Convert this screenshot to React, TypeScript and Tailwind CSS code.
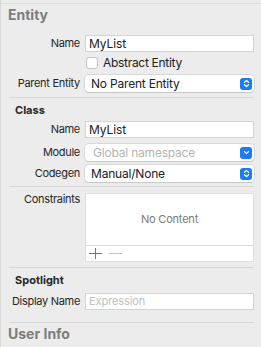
import React from "react";

const font = { fontFamily: "Inter, 'Noto Sans', sans-serif" };

const Stepper: React.FC = () => (
  <span className="w-[12px] h-[12px] rounded-[3px] bg-[#1a7cf5] flex items-center justify-center">
    <svg width="7" height="9" viewBox="0 0 7 9" fill="none" stroke="white" strokeWidth="1.3" strokeLinecap="round" strokeLinejoin="round">
      <path d="M1.5 3.2 L3.5 1.4 L5.5 3.2" />
      <path d="M1.5 5.8 L3.5 7.6 L5.5 5.8" />
    </svg>
  </span>
);

const Chevron: React.FC = () => (
  <span className="w-[12px] h-[12px] rounded-[3px] bg-[#1a7cf5] flex items-center justify-center">
    <svg width="7" height="7" viewBox="0 0 7 7" fill="none" stroke="white" strokeWidth="1.3" strokeLinecap="round" strokeLinejoin="round">
      <path d="M1.5 2.6 L3.5 4.6 L5.5 2.6" />
    </svg>
  </span>
);

const Label: React.FC<{ children: React.ReactNode }> = ({ children }) => (
  <span className="w-[80px] text-right text-[11px] tracking-[-0.3px] text-[#262626] shrink-0">{children}</span>
);

const Field: React.FC<{ value?: string; placeholder?: string }> = ({ value, placeholder }) => (
  <div className="flex-1 h-[17px] bg-white border border-[#d3d3d3] flex items-center pl-[3px] text-[12px] leading-none tracking-[-0.1px]">
    {value ? <span className="text-[#222]">{value}</span> : <span className="text-[#c0c0c0] text-[11px]">{placeholder}</span>}
  </div>
);

const Popup: React.FC<{ value: string; dim?: boolean; chevron?: boolean }> = ({ value, dim, chevron }) => (
  <div className="flex-1 h-[17px] bg-white rounded-[4px] shadow-[0_0_0_0.5px_#c8c8c8,0_0.5px_1px_rgba(0,0,0,0.15)] flex items-center justify-between pr-[2px]">
    <span className={dim ? "pl-[8px] text-[12px] tracking-[-0.2px] text-[#b4b4b4]" : "pl-[6px] text-[12px] tracking-[-0.2px] text-[#222]"}>{value}</span>
    {chevron ? <Chevron /> : <Stepper />}
  </div>
);

const Divider: React.FC<{ className?: string }> = ({ className }) => (
  <div className={`ml-[9px] mr-[7px] h-px bg-[#d6d6d6] ${className ?? ""}`} />
);

const Row: React.FC<{ label: string; children: React.ReactNode; className?: string }> = ({ label, children, className }) => (
  <div className={`h-[17px] flex items-center gap-[5px] pr-[7px] ${className ?? ""}`}>
    <Label>{label}</Label>
    {children}
  </div>
);

const Heading: React.FC<{ children: React.ReactNode; big?: boolean; className?: string }> = ({ children, big, className }) => (
  <div
    className={
      big
        ? `pl-[8px] pt-[4px] leading-[14px] text-[14px] font-bold text-[#7d7d7d] ${className ?? ""}`
        : `pl-[15px] pt-[5px] leading-[14px] text-[11px] font-bold text-[#262626] ${className ?? ""}`
    }
  >
    {children}
  </div>
);

export default function App() {
  return (
    <div className="w-[261px] h-[347px] bg-[#ececec] overflow-hidden relative flex flex-col" style={font}>
      <div className="absolute left-0 top-0 bottom-0 w-px bg-[#d9d9d9]" />
      <div className="h-[4px] shrink-0 border-b border-[#dedede]" />

      <Heading big className="h-[31px] shrink-0">Entity</Heading>

      <Row label="Name">
        <Field value="MyList" />
      </Row>
      <div className="flex items-center pl-[86px] mt-[4px] h-[13px] shrink-0">
        <span className="w-[12px] h-[12px] bg-white border border-[#c2c2c2] rounded-[3px]" />
        <span className="ml-[5px] text-[12px] tracking-[-0.3px] text-[#222]">Abstract Entity</span>
      </div>
      <Row label="Parent Entity" className="mt-[6px] shrink-0">
        <Popup value="No Parent Entity" />
      </Row>

      <Divider className="mt-[5px] shrink-0" />

      <Heading className="h-[23px] shrink-0">Class</Heading>
      <Row label="Name" className="shrink-0">
        <Field value="MyList" />
      </Row>
      <Row label="Module" className="mt-[6px] shrink-0">
        <Popup value="Global namespace" dim chevron />
      </Row>
      <Row label="Codegen" className="mt-[4px] shrink-0">
        <Popup value="Manual/None" />
      </Row>

      <Divider className="mt-[4px] shrink-0" />

      <div className="flex items-start gap-[5px] pr-[7px] mt-[6px] shrink-0">
        <span className="w-[80px] text-right text-[11px] leading-[11px] tracking-[-0.3px] text-[#262626] pt-[1px]">Constraints</span>
        <div className="flex-1 h-[69px] bg-white border border-[#e0e0e0] flex flex-col">
          <div className="flex-1 flex items-center justify-center text-[11px] tracking-[-0.2px] text-[#7a7a7a]">No Content</div>
          <div className="h-[16px] border-t border-[#dadada] flex items-center pl-[3px] gap-[7px]">
            <svg width="13" height="11" viewBox="0 0 13 11" stroke="#777777" strokeWidth="1">
              <path d="M6.5 0 V11 M0 5.5 H13" />
            </svg>
            <svg width="13" height="11" viewBox="0 0 13 11" stroke="#c2c2c2" strokeWidth="1">
              <path d="M0 5.5 H13" />
            </svg>
          </div>
        </div>
      </div>

      <Divider className="mt-[5px] shrink-0" />

      <Heading className="h-[25px] shrink-0">Spotlight</Heading>
      <Row label="Display Name" className="shrink-0">
        <Field placeholder="Expression" />
      </Row>

      <Divider className="mt-[12px] shrink-0" />

      <Heading big className="shrink-0">User Info</Heading>
    </div>
  );
}
